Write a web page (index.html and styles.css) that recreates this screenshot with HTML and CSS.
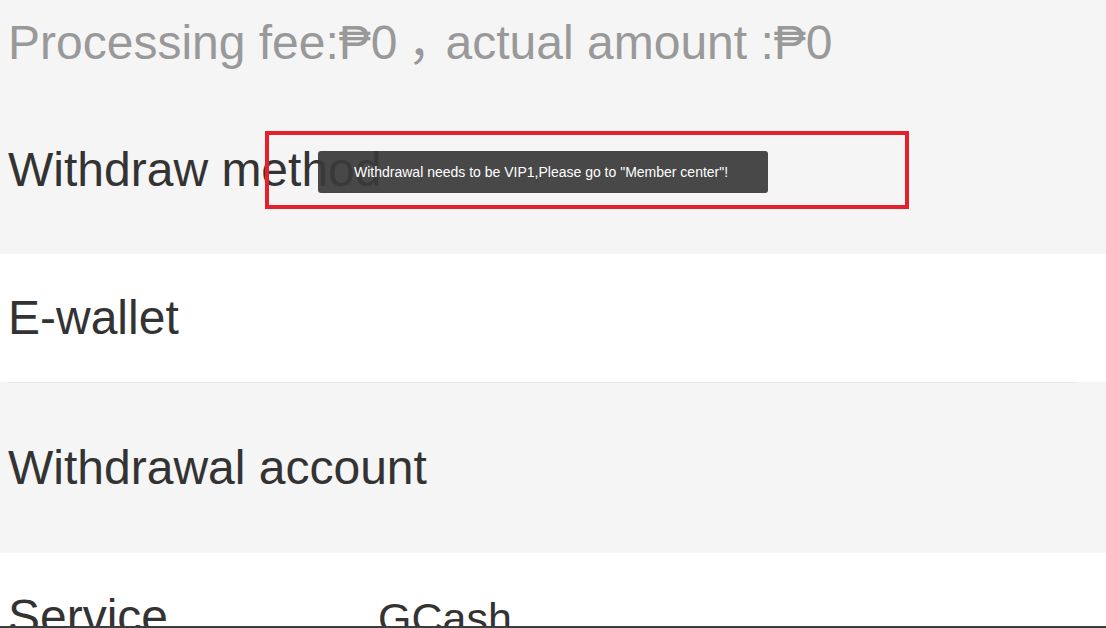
FILE: index.html
```html
<!DOCTYPE html>
<html>
<head>
<meta charset="utf-8">
<link rel="stylesheet" href="styles.css">
</head>
<body>
<div class="page">
  <section class="summary">
    <div class="fee-row">Processing fee:₱0<span class="sep">，</span>actual amount :₱0</div>
    <div class="method-row">Withdraw method</div>
  </section>
  <div class="row white">
    <div class="row-inner">E-wallet</div>
  </div>
  <div class="row gray tall">
    <div class="row-inner">Withdrawal account</div>
  </div>
  <div class="row white">
    <div class="row-inner split">
      <span class="label">Service</span>
      <span class="value">GCash</span>
    </div>
  </div>
</div>
<div class="bottom-bar"></div>
<div class="highlight"></div>
<div class="toast">Withdrawal needs to be VIP1,Please go to "Member center"!</div>
</body>
</html>
```

FILE: styles.css
```css
html, body {
  margin: 0;
  padding: 0;
  background: #f5f5f5;
  overflow: hidden;
}

body {
  font-family: "Liberation Sans", Arial, "Noto Sans CJK SC", sans-serif;
  font-size: 48px;
  color: #333333;
}

.page {
  display: flex;
  flex-direction: column;
}

.summary {
  background: #f5f5f5;
  height: 254px;
  display: flex;
  flex-direction: column;
}

.fee-row {
  height: 86px;
  line-height: 86px;
  padding-left: 8px;
  color: #999999;
  white-space: nowrap;
}

.sep {
  display: inline-block;
  padding-left: 10px;
  letter-spacing: -10px;
  line-height: 48px;
  white-space: nowrap;
  vertical-align: baseline;
}

.method-row {
  height: 168px;
  line-height: 168px;
  padding-left: 8px;
  color: #333333;
}

.row {
  display: flex;
  align-items: center;
}

.row.white {
  background: #ffffff;
  height: 128px;
}

.row.gray {
  background: #f5f5f5;
}

.row.tall {
  height: 170px;
}

.row-inner {
  padding-left: 8px;
  line-height: 56px;
}

.split {
  display: flex;
  align-items: baseline;
}

.label {
  width: 370px;
}

.value {
  font-size: 43px;
}

.page > .row:nth-child(2) {
  position: relative;
}

.page > .row:nth-child(2)::after {
  content: "";
  position: absolute;
  left: 8px;
  right: 29px;
  bottom: -1px;
  height: 1px;
  background: #e6e6e6;
}

.page > .row:nth-child(3) {
  margin-top: 1px;
}

.bottom-bar {
  position: fixed;
  left: 0;
  right: 0;
  bottom: 0;
  height: 2px;
  background: #3d3d3d;
}

.highlight {
  position: absolute;
  left: 265px;
  top: 131px;
  width: 636px;
  height: 70px;
  border: 4px solid #e3202b;
}

.toast {
  position: absolute;
  left: 318px;
  top: 151px;
  width: 450px;
  height: 42px;
  box-sizing: border-box;
  padding-left: 36px;
  background: rgba(58, 58, 58, 0.93);
  border-radius: 3px;
  color: #ffffff;
  font-size: 14px;
  line-height: 42px;
  white-space: nowrap;
}
```
